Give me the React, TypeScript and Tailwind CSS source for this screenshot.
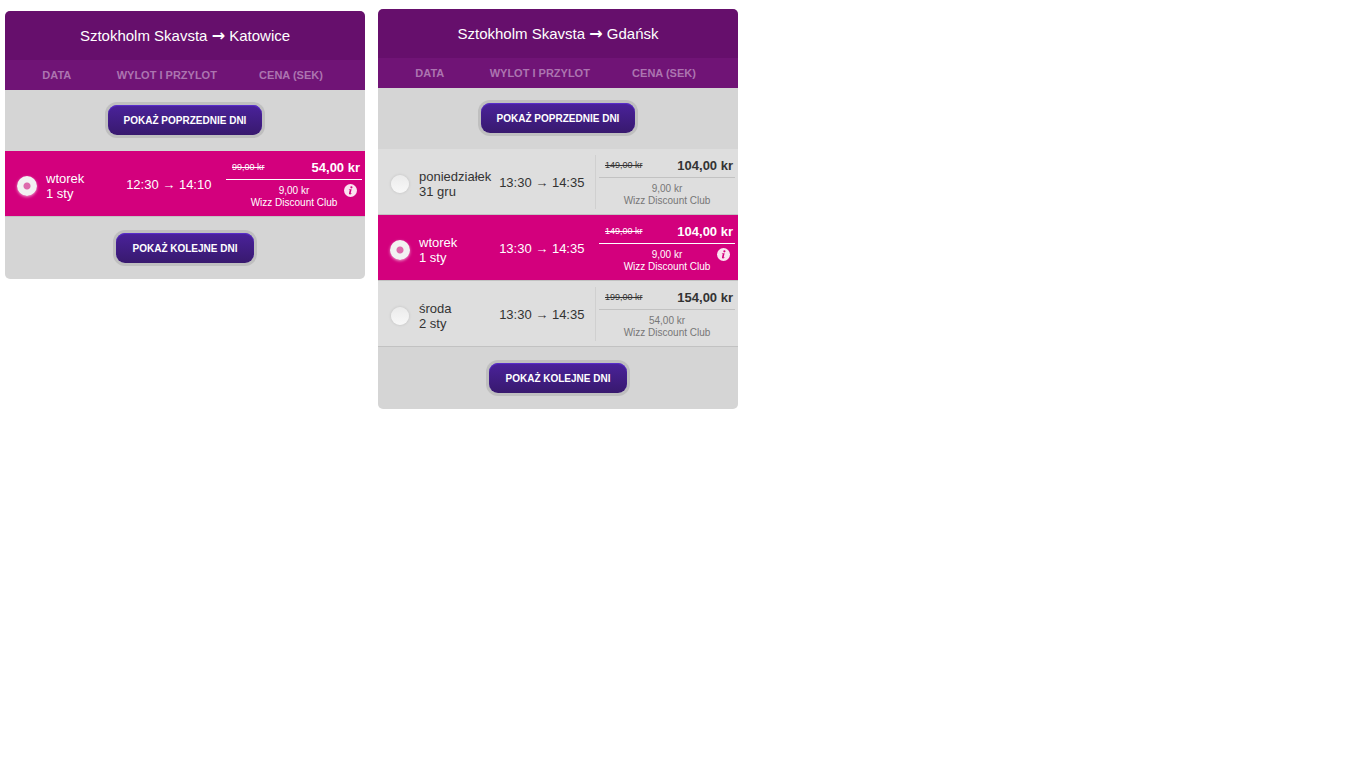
import { useState } from 'react'

interface Flight {
  id: string
  weekday: string
  day: string
  departure: string
  arrival: string
  oldPrice: string
  price: string
  clubPrice: string
}

interface FlightTableProps {
  name: string
  from: string
  to: string
  flights: Flight[]
  initial: string
  className?: string
}

const KATOWICE: Flight[] = [
  { id: 'ktw-1', weekday: 'wtorek', day: '1 sty', departure: '12:30', arrival: '14:10', oldPrice: '99,00 kr', price: '54,00 kr', clubPrice: '9,00 kr' },
]

const GDANSK: Flight[] = [
  { id: 'gdn-31', weekday: 'poniedziałek', day: '31 gru', departure: '13:30', arrival: '14:35', oldPrice: '149,00 kr', price: '104,00 kr', clubPrice: '9,00 kr' },
  { id: 'gdn-1', weekday: 'wtorek', day: '1 sty', departure: '13:30', arrival: '14:35', oldPrice: '149,00 kr', price: '104,00 kr', clubPrice: '9,00 kr' },
  { id: 'gdn-2', weekday: 'środa', day: '2 sty', departure: '13:30', arrival: '14:35', oldPrice: '199,00 kr', price: '154,00 kr', clubPrice: '54,00 kr' },
]

function InfoIcon() {
  return (
    <svg viewBox="0 0 13 13" className="size-[13px]" aria-hidden="true">
      <circle cx="6.5" cy="6.5" r="6.5" fill="#fbe3f1" />
      <circle cx="7.4" cy="3.3" r="1.1" fill="#d3007d" />
      <path d="M4.9 5.3h2.7L6.7 9.2c-.1.5.2.5.9 0l.2.3C6.7 10.7 4.7 10.8 5 9.3l.7-3.3c.1-.3-.3-.3-.8-.3z" fill="#d3007d" />
    </svg>
  )
}

function DaysButton({ children }: { children: string }) {
  return (
    <button
      type="button"
      className="h-[30px] cursor-pointer rounded-[9px] bg-linear-to-b from-[#4a229b] to-[#38196e] px-4 text-[10px] font-bold text-white uppercase shadow-[0_0_0_3px_#bfbfbf,inset_0_1px_1px_#5a2fd0]"
    >
      {children}
    </button>
  )
}

function FlightRow({ flight, name, selected, onSelect }: { flight: Flight; name: string; selected: boolean; onSelect: () => void }) {
  return (
    <tr className={selected ? 'h-[66px] bg-[#d3007d] text-white' : 'h-[66px] bg-[#dedede] text-[#333333]'}>
      <td className="border-b border-[#c2c2c2] pt-1 pl-3">
        <label htmlFor={flight.id} className="flex cursor-pointer items-center gap-[9px] text-[13px] leading-[15px]">
          <input
            id={flight.id}
            type="radio"
            name={name}
            checked={selected}
            onChange={onSelect}
            className="m-px size-[18px] shrink-0 cursor-pointer appearance-none rounded-full bg-linear-to-b from-[#ebebeb] to-[#f8f8f8] shadow-[0_0_3px_#00000026] checked:m-0 checked:size-5 checked:bg-[radial-gradient(circle,#dd6aac_0,#dd6aac_3px,#f2f2f2_4px)] checked:shadow-[0_1px_3px_#ffffff99]"
          />
          <span className="whitespace-nowrap">
            {flight.weekday}
            <br />
            {flight.day}
          </span>
        </label>
      </td>
      <td className="border-b border-[#c2c2c2] pt-px text-center text-[13px] leading-[15px] whitespace-nowrap">
        {flight.departure} → {flight.arrival}
      </td>
      <td className="border-b border-[#c2c2c2] py-[5px]">
        <div className={selected ? 'relative ml-px h-[54px] border-l border-transparent px-[3px]' : 'relative ml-px h-[54px] border-l border-[#d0d0d0] px-[3px]'}>
          <div className={selected ? 'flex h-[23px] items-center justify-between border-b border-white pr-[2px] pl-[6px]' : 'flex h-[23px] items-center justify-between border-b border-[#c2c2c2] pr-[2px] pl-[6px]'}>
            <s className="text-[9px]">{flight.oldPrice}</s>
            <strong className="text-[13px]">{flight.price}</strong>
          </div>
          <div className={selected ? 'pt-[5px] text-center text-[10px] leading-3' : 'pt-[5px] text-center text-[10px] leading-3 text-[#777777]'}>
            {flight.clubPrice}
            <br />
            Wizz Discount Club
          </div>
          {selected ? (
            <button type="button" aria-label="Wizz Discount Club" className="absolute top-[27px] right-2 cursor-pointer">
              <InfoIcon />
            </button>
          ) : null}
        </div>
      </td>
    </tr>
  )
}

function FlightTable({ name, from, to, flights, initial, className = '' }: FlightTableProps) {
  const [selected, setSelected] = useState(initial)
  return (
    <section className={`w-full max-w-[360px] overflow-hidden rounded-[5px] bg-[#d5d5d5] ${className}`}>
      <h2 className="bg-[#660f6c] py-3 text-center text-[15px] leading-[25px] text-white">
        {from} <span className="font-['DejaVu_Sans'] text-base leading-none font-bold">→</span> {to}
      </h2>
      <table className="w-full table-fixed border-separate border-spacing-0">
        <colgroup>
          <col className="w-[31%]" />
          <col className="w-[29%]" />
          <col className="w-[40%]" />
        </colgroup>
        <thead>
          <tr className="h-[30px] bg-[#701476] text-[11px] text-[#ac74b0] uppercase">
            <th scope="col" className="pr-2">Data</th>
            <th scope="col" className="pr-1 whitespace-nowrap">Wylot i przylot</th>
            <th scope="col" className="pr-1">Cena (SEK)</th>
          </tr>
        </thead>
        <tbody>
          <tr>
            <td colSpan={3} className="h-[61px] pb-px text-center">
              <DaysButton>Pokaż poprzednie dni</DaysButton>
            </td>
          </tr>
          {flights.map((flight) => (
            <FlightRow
              key={flight.id}
              flight={flight}
              name={name}
              selected={flight.id === selected}
              onSelect={() => setSelected(flight.id)}
            />
          ))}
          <tr>
            <td colSpan={3} className="h-[62px] text-center">
              <DaysButton>Pokaż kolejne dni</DaysButton>
            </td>
          </tr>
        </tbody>
      </table>
    </section>
  )
}

export default function App() {
  return (
    <main className="flex min-h-screen items-start gap-[13px] bg-white px-[5px] py-[9px] font-['Liberation_Sans',Arial,sans-serif]">
      <FlightTable name="katowice" from="Sztokholm Skavsta" to="Katowice" flights={KATOWICE} initial="ktw-1" className="mt-[2px]" />
      <FlightTable name="gdansk" from="Sztokholm Skavsta" to="Gdańsk" flights={GDANSK} initial="gdn-1" />
    </main>
  )
}
